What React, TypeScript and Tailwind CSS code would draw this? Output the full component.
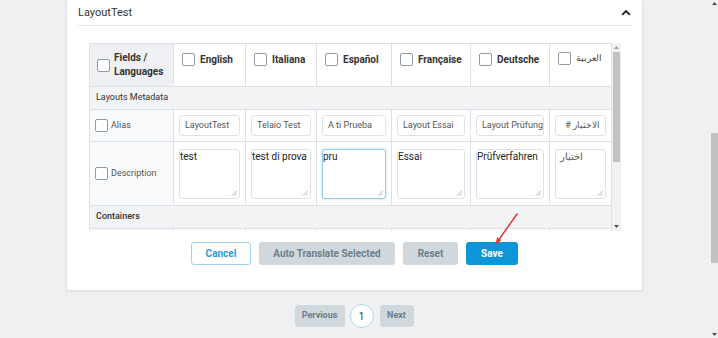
import React from "react";

const langs = [
  { name: "English", alias: "LayoutTest", desc: "test" },
  { name: "Italiana", alias: "Telaio Test", desc: "test di prova" },
  { name: "Español", alias: "A ti Prueba", desc: "pru", focus: true },
  { name: "Française", alias: "Layout Essai", desc: "Essai" },
  { name: "Deutsche", alias: "Layout Prüfung", desc: "Prüfverfahren" },
  { name: "العربية", alias: "الاختبار #", desc: "اختبار", rtl: true },
];

const colWidths = [84, 72, 71, 75, 79, 79, 62];

function Box() {
  return (
    <span className="inline-block w-[13px] h-[13px] shrink-0 rounded-[2px] border border-[#8e9aa6] bg-white" />
  );
}

function Grip() {
  return (
    <svg className="absolute right-[2px] bottom-[2px]" width="6" height="6" viewBox="0 0 6 6">
      <path d="M5.5 1 L1 5.5 M5.5 3.5 L3.5 5.5" stroke="#9aa0a6" strokeWidth="0.8" />
    </svg>
  );
}

export default function App() {
  return (
    <div className="relative w-[718px] h-[338px] overflow-hidden bg-[#eef0f2] font-['Roboto',sans-serif] text-[#333]">
      <div className="ml-[66px] w-[577px] h-[291px] bg-white border border-t-0 border-[#dfe3e7] shadow-[0_1px_2px_rgba(0,0,0,0.06)] px-[10px]">
        <div className="h-[26px] flex items-center justify-between border-b border-[#e6e9ec]">
          <span className="text-[11px] text-[#333] pl-[1px] pt-[1px]">LayoutTest</span>
          <svg width="10" height="7" viewBox="0 0 10 7" className="mr-[1px]">
            <path d="M1.2 5.8 L5 2 L8.8 5.8" fill="none" stroke="#222" strokeWidth="1.8" />
          </svg>
        </div>

        <div className="ml-[12px] mt-[17px] flex h-[188px]">
          <div className="w-[523px] h-[188px] overflow-hidden">
            <table className="table-fixed border-collapse w-[523px] border border-[#dbe1e6] text-[9px]">
              <colgroup>
                {colWidths.map((w, i) => (
                  <col key={i} style={{ width: w }} />
                ))}
              </colgroup>
              <thead>
                <tr className="h-[43px]">
                  <th className="border border-[#dbe1e6] bg-[#eef0f3] px-[7px] align-top pt-[7px] text-left">
                    <div className="flex items-center gap-[4px]">
                      <Box />
                      <span className="text-[10px] font-bold leading-[14px] text-[#333]">
                        Fields /<br />Languages
                      </span>
                    </div>
                  </th>
                  {langs.map((l) => (
                    <th key={l.name} className="border border-[#dbe1e6] bg-white px-[8px] align-top pt-[8px] text-left">
                      <div className="flex items-center gap-[5px]">
                        <Box />
                        <span className={l.rtl ? "text-[9px] font-normal text-[#444]" : "text-[10px] font-bold text-[#333]"}>
                          {l.name}
                        </span>
                      </div>
                    </th>
                  ))}
                </tr>
              </thead>
              <tbody>
                <tr className="h-[23px] bg-[#f2f3f5]">
                  <td colSpan={7} className="border border-[#dbe1e6] px-[6px] text-[#333]">
                    Layouts Metadata
                  </td>
                </tr>
                <tr className="h-[32px]">
                  <td className="border border-[#dbe1e6] bg-[#f9fafb] px-[5px]">
                    <div className="flex items-center gap-[3px] text-[#555]">
                      <Box />
                      <span>Alias</span>
                    </div>
                  </td>
                  {langs.map((l) => (
                    <td key={l.name} className="border border-[#dbe1e6] px-[5px]">
                      <div
                        dir={l.rtl ? "rtl" : "ltr"}
                        className="h-[21px] rounded-[3px] border border-[#dde2e6] bg-white px-[5px] flex items-center text-[9px] text-[#555] whitespace-nowrap overflow-hidden"
                      >
                        {l.alias}
                      </div>
                    </td>
                  ))}
                </tr>
                <tr className="h-[64px]">
                  <td className="border border-[#dbe1e6] bg-[#f9fafb] px-[5px]">
                    <div className="flex items-center gap-[3px] text-[#555]">
                      <Box />
                      <span>Description</span>
                    </div>
                  </td>
                  {langs.map((l) => (
                    <td key={l.name} className="border border-[#dbe1e6] px-[5px]">
                      <div
                        className={
                          "relative h-[50px] rounded-[3px] border bg-white pt-[1px] text-[10px] leading-[12px] text-[#222] " +
                          (l.focus
                            ? "border-[#8fcdf0] shadow-[0_0_2px_rgba(80,170,230,0.5)]"
                            : "border-[#dde2e6]") +
                          (l.rtl ? " pl-[4px] text-[8px] text-[#555]" : "")
                        }
                      >
                        {l.desc}
                        <Grip />
                      </div>
                    </td>
                  ))}
                </tr>
                <tr className="h-[23px] bg-[#f2f3f5]">
                  <td colSpan={7} className="border border-[#dbe1e6] px-[6px] font-medium text-[#333]">
                    Containers
                  </td>
                </tr>
                <tr className="h-[30px]">
                  <td className="border border-[#dbe1e6] bg-[#f9fafb]" />
                  {langs.map((l) => (
                    <td key={l.name} className="border border-[#dbe1e6]" />
                  ))}
                </tr>
              </tbody>
            </table>
          </div>
          <div className="relative w-[9px] h-[188px] bg-[#f1f1f1]">
            <svg className="absolute left-[2px] top-[3px]" width="5" height="3" viewBox="0 0 5 3">
              <path d="M0 3 L2.5 0 L5 3 Z" fill="#a3a3a3" />
            </svg>
            <div className="absolute left-[1px] top-[9px] w-[7px] h-[110px] bg-[#c1c1c1]" />
            <svg className="absolute left-[2px] bottom-[3px]" width="5" height="3" viewBox="0 0 5 3">
              <path d="M0 0 L5 0 L2.5 3 Z" fill="#505050" />
            </svg>
          </div>
        </div>

        <div className="mt-[11px] flex justify-center gap-[8px] text-[10px] font-bold">
          <button className="w-[60px] h-[23px] rounded-[3px] border border-[#9fd3ee] bg-white text-[#2a9bd6]">
            Cancel
          </button>
          <button className="w-[136px] h-[23px] rounded-[3px] bg-[#d0d8dd] text-[#6e7e89]">
            Auto Translate Selected
          </button>
          <button className="w-[55px] h-[23px] rounded-[3px] bg-[#d0d8dd] text-[#6e7e89]">
            Reset
          </button>
          <button className="w-[52px] h-[23px] rounded-[3px] bg-[#0e95d8] text-white">
            Save
          </button>
        </div>
      </div>

      <div className="mt-[13px] flex justify-center items-center gap-[5px] pl-[2px] pr-[12px] text-[9px] font-bold text-[#6b7c88]">
        <span className="w-[50px] h-[22px] rounded-[3px] bg-[#d0d8dd] flex items-center justify-center">Pervious</span>
        <span className="w-[24px] h-[24px] rounded-full border border-[#a9d9f2] bg-white flex items-center justify-center text-[10px] font-normal text-[#333]">
          1
        </span>
        <span className="w-[34px] h-[22px] rounded-[3px] bg-[#d0d8dd] flex items-center justify-center ml-[1px]">Next</span>
      </div>

      <svg className="absolute left-[490px] top-[210px]" width="32" height="40" viewBox="0 0 32 40">
        <path d="M27 4 L8 31" stroke="#e0403a" strokeWidth="1.6" strokeLinecap="round" />
        <path d="M5 35 L7.2 27.2 L11.4 30.2 Z" fill="#e0403a" />
      </svg>

      <div className="absolute right-0 top-0 w-[8px] h-[338px]">
        <svg className="absolute left-[2px] top-[2px]" width="5" height="3" viewBox="0 0 5 3">
          <path d="M0 3 L2.5 0 L5 3 Z" fill="#505050" />
        </svg>
        <div className="absolute left-[1px] top-[133px] w-[7px] h-[130px] bg-[#c1c1c1]" />
        <svg className="absolute left-[2px] bottom-[2px]" width="5" height="3" viewBox="0 0 5 3">
          <path d="M0 0 L5 0 L2.5 3 Z" fill="#505050" />
        </svg>
      </div>
    </div>
  );
}
